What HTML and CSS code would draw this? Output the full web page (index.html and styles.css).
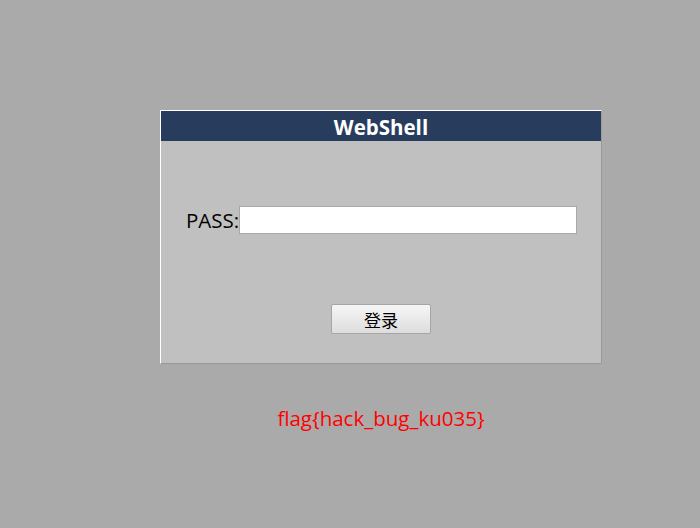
FILE: index.html
```html
<!DOCTYPE html>
<html>
<head>
<meta charset="utf-8">
<link rel="stylesheet" href="styles.css">
</head>
<body>
<div class="wrap">
  <div class="panel">
    <div class="head">WebShell</div>
    <div class="body">
      <div class="row">
        <label class="lbl">PASS:</label><input class="pass" type="password">
      </div>
      <div class="actions">
        <button class="btn">登录</button>
      </div>
    </div>
  </div>
  <div class="flag">flag{hack_bug_ku035}</div>
</div>
</body>
</html>
```
FILE: styles.css
```css
html, body {
  margin: 0;
  padding: 0;
  background: #aaaaaa;
  font-family: "Open Sans", "Noto Sans", "Noto Sans CJK SC", sans-serif;
}
.wrap {
  padding: 110px 0 0 160px;
  width: 442px;
}
.panel {
  width: 440px;
  height: 252px;
  background: #c0c0c0;
  border: 1px solid;
  border-color: #ffffff #999999 #999999 #ffffff;
  display: flex;
  flex-direction: column;
}
.head {
  height: 30px;
  background: #283c5e;
  color: #ffffff;
  font-weight: bold;
  font-size: 20.5px;
  line-height: 32px;
  text-align: center;
}
.body {
  display: flex;
  flex-direction: column;
}
.row {
  display: flex;
  align-items: center;
  margin-top: 65px;
  padding-left: 25px;
  height: 28px;
}
.lbl {
  font-size: 20.5px;
  color: #000;
  line-height: 28px;
}
.pass {
  width: 338px;
  box-sizing: border-box;
  height: 28px;
  border: 1px solid #a9a9a9;
  background: #fff;
  margin: 0;
  padding: 0 3px;
}
.actions {
  display: flex;
  justify-content: center;
  margin-top: 70px;
}
.btn {
  width: 100px;
  height: 30px;
  box-sizing: border-box;
  border: 1px solid #a6a6a6;
  border-radius: 2px;
  background: linear-gradient(#f6f6f6, #dddddd);
  font-family: "Noto Sans CJK SC", sans-serif;
  font-size: 17px;
  color: #000;
  padding: 0;
}
.flag {
  margin-top: 40px;
  text-align: center;
  color: #ff0000;
  font-size: 20.5px;
}
```
